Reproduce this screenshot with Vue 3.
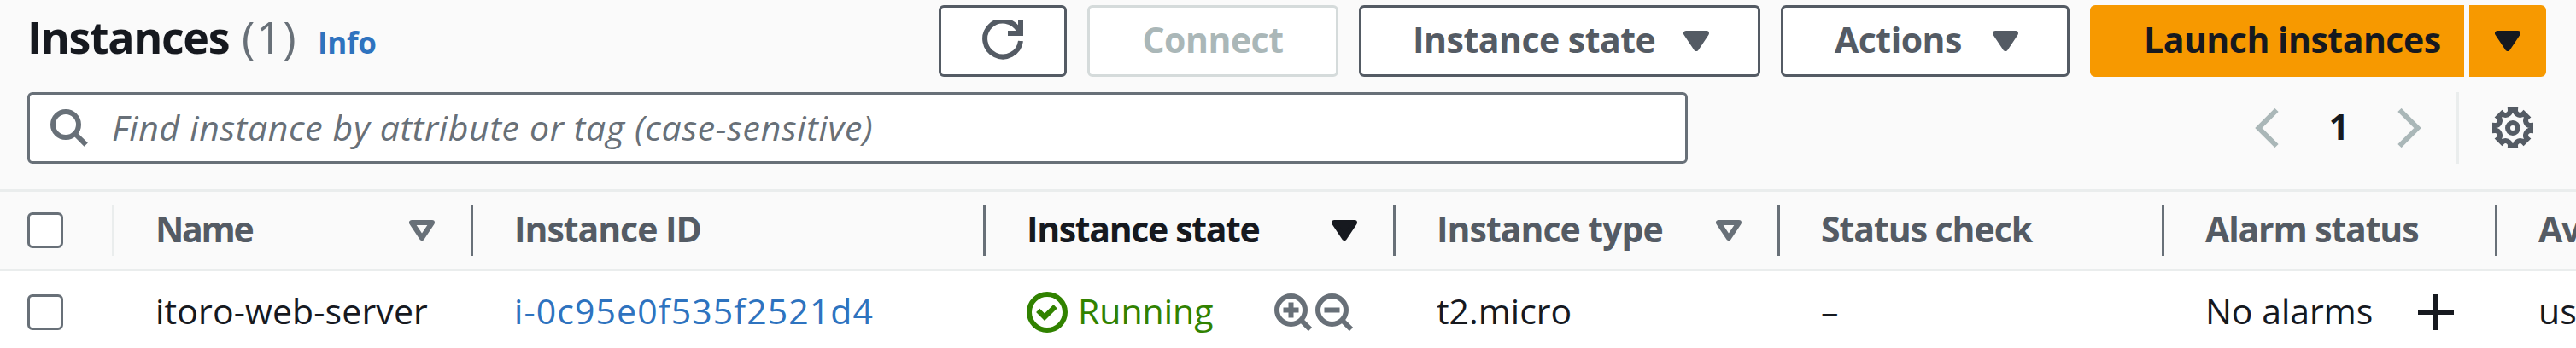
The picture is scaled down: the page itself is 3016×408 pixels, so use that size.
<script setup>
const columns = [
  { key: 'name', label: 'Name', sort: 'idle', track: -2.3 },
  { key: 'id', label: 'Instance ID', track: -1.05 },
  { key: 'state', label: 'Instance state', sort: 'active', track: -1.35 },
  { key: 'type', label: 'Instance type', sort: 'idle', track: -1 },
  { key: 'check', label: 'Status check', track: -1.05 },
  { key: 'alarm', label: 'Alarm status', track: -1.15 },
  { key: 'zone', label: 'Availability Zone', track: -1.2 }
]

// Eight flat teeth joined by round notches, drawn on a 16-unit grid.
const gear = (() => {
  let d = ''
  for (let i = 0; i < 8; i++) {
    const a = (i * Math.PI) / 4
    const pt = (x, y) =>
      `${(8 + x * Math.cos(a) - y * Math.sin(a)).toFixed(3)} ${(8 + x * Math.sin(a) + y * Math.cos(a)).toFixed(3)}`
    d += (i ? 'A1.85 1.85 0 0 0 ' : 'M') + pt(-1, -7) + 'L' + pt(1, -7)
  }
  return d + 'A1.85 1.85 0 0 0 7 1Z'
})()
</script>

<template>
  <main class="panel">
    <header class="bar">
      <h1 class="title">
        <span class="name">Instances</span><span class="count">(1)</span><a class="info">Info</a>
      </h1>
      <div class="actions">
        <button class="btn refresh" aria-label="Refresh">
          <svg class="icon" viewBox="0 0 16 16"><path d="M10 5h5V0M15 8a7 7 0 1 1-.7-4" /></svg>
        </button>
        <button class="btn connect" disabled><span class="label">Connect</span></button>
        <button class="btn state">
          <span class="label">Instance state</span>
          <svg class="caret" viewBox="3 4 10 8"><path d="M4 5h8l-4 6z" /></svg>
        </button>
        <button class="btn more">
          <span class="label">Actions</span>
          <svg class="caret" viewBox="3 4 10 8"><path d="M4 5h8l-4 6z" /></svg>
        </button>
        <div class="split">
          <button class="btn launch"><span class="label">Launch instances</span></button>
          <button class="btn drop" aria-label="More launch options">
            <svg class="caret" viewBox="3 4 10 8"><path d="M4 5h8l-4 6z" /></svg>
          </button>
        </div>
      </div>
    </header>

    <div class="tools">
      <div class="search">
        <svg class="lens" viewBox="0 0 44 44"><circle cx="18" cy="18" r="15" /><path d="M28 28 41.7 41.7" /></svg>
        <span class="hint">Find instance by attribute or tag (case-sensitive)</span>
      </div>
      <nav class="pager">
        <svg class="chev" viewBox="0 0 28 46"><path d="M25.5 2 4.5 23l21 21" /></svg>
        <span class="page">1</span>
        <svg class="chev" viewBox="0 0 28 46"><path d="m2.5 2 21 21-21 21" /></svg>
        <span class="rule"></span>
        <svg class="icon" viewBox="0 0 16 16"><path :d="gear" /><circle cx="8" cy="8" r="2" /></svg>
      </nav>
    </div>

    <div class="grid head">
      <div class="cell pick light"><span class="box"></span></div>
      <div v-for="c in columns" :key="c.key" class="cell" :class="c.sort">
        <span class="text" :style="{ letterSpacing: c.track + 'px' }">{{ c.label }}</span>
        <svg v-if="c.sort" class="caret" viewBox="3 4 10 8"><path d="M4 5h8l-4 6z" /></svg>
      </div>
    </div>

    <div class="grid row">
      <div class="cell pick"><span class="box"></span></div>
      <div class="cell"><span class="text server">itoro-web-server</span></div>
      <div class="cell"><a class="text id">i-0c95e0f535f2521d4</a></div>
      <div class="cell running">
        <svg class="icon ok" viewBox="0 0 16 16"><circle cx="8" cy="8" r="7" /><path d="M4.4 7.3 7 9.9l4.2-4.15" /></svg>
        <span class="text">Running</span>
        <svg class="lens first" viewBox="0 0 44 44">
          <circle cx="19.5" cy="19.5" r="16.5" /><path d="M30.5 30.5 42 42M10.5 19.5h18M19.5 10.5v18" />
        </svg>
        <svg class="lens" viewBox="0 0 44 44">
          <circle cx="19.5" cy="19.5" r="16.5" /><path d="M30.5 30.5 42 42M10.5 19.5h18" />
        </svg>
      </div>
      <div class="cell"><span class="text">t2.micro</span></div>
      <div class="cell"><span class="text">–</span></div>
      <div class="cell alarm">
        <span class="text">No alarms</span>
        <svg class="plus" viewBox="0 0 42 42"><path d="M0 21h42M21 0v42" /></svg>
      </div>
      <div class="cell"><span class="text">us-east-1a</span></div>
    </div>
  </main>
</template>

<style>
html, body { background: #fafafa; overflow: hidden; }
</style>

<style scoped>
.panel {
  box-sizing: border-box;
  width: 3016px;
  height: 408px;
  padding-top: 6px;
  overflow: hidden;
  background: #fafafa;
  color: #16191f;
  font: 400 41px/60px "Open Sans", "Noto Sans", sans-serif;
}
svg { display: block; flex: none; fill: none; stroke: currentColor; stroke-width: 2; }
.icon { width: 48px; height: 48px; }
.caret { width: 30px; height: 24px; fill: currentColor; stroke-linejoin: round; }
.lens { width: 44px; height: 44px; stroke-width: 6; color: #687078; }

.bar { display: flex; justify-content: space-between; height: 84px; padding: 0 35px 0 32px; }
.title { display: flex; align-items: baseline; margin: 0; font-size: 52px; line-height: 73px; white-space: nowrap; }
.name { letter-spacing: -1.4px; }
.count { margin-left: 15px; font-weight: 400; letter-spacing: 1.5px; color: #687078; }
.info { margin-left: 24px; font-size: 35px; letter-spacing: -.3px; color: #2e73bf; }

.actions { display: flex; gap: 24px; }
.btn {
  box-sizing: border-box;
  display: flex;
  align-items: center;
  justify-content: space-between;
  height: 84px;
  padding: 0 57px 0 60px;
  border: 3px solid #545b64;
  border-radius: 6px;
  background: #fff;
  color: #545b64;
  font: inherit;
  font-weight: 700;
  letter-spacing: -.5px;
  white-space: nowrap;
}
.label { padding-bottom: 4px; }
.refresh { width: 150px; padding: 0; justify-content: center; }
.connect { width: 294px; padding: 0; justify-content: center; border-color: #d5dbdb; color: #aab7b8; }
.state { width: 470px; }
.more { width: 338px; }
.split { display: flex; gap: 6px; }
.launch { width: 438px; padding: 0 0 0 60px; border-color: #f79900; border-radius: 6px 0 0 6px; background: #f79900; color: #16191f; }
.drop { width: 90px; padding: 0; justify-content: center; border-color: #f79900; border-radius: 0 6px 6px 0; background: #f79900; color: #16191f; }

.tools { display: flex; justify-content: space-between; height: 84px; margin-top: 18px; padding: 0 50px 0 32px; }
.search {
  box-sizing: border-box;
  display: flex;
  align-items: center;
  width: 1944px;
  padding-left: 24px;
  border: 3px solid #687078;
  border-radius: 6px;
  background: #fff;
}
.hint { margin-left: 28px; padding-bottom: 2px; font-style: italic; letter-spacing: .65px; color: #687078; }
.pager { display: flex; align-items: center; }
.chev { width: 28px; height: 46px; stroke-width: 6; color: #aab7b8; }
.page { box-sizing: border-box; width: 139px; padding: 0 0 4px 2px; font-weight: 700; text-align: center; }
.rule { width: 3px; height: 84px; margin: 0 39px 0 41px; background: #eaeded; }
.pager .icon { color: #545b64; }

.grid { display: grid; grid-template-columns: 134px 420px 600px 480px 450px 450px 390px 1fr; }
.cell { display: flex; align-items: center; min-width: 0; padding-left: 48px; overflow: hidden; white-space: nowrap; }
.pick { padding-left: 32px; }
.box { box-sizing: border-box; width: 42px; height: 42px; border: 3px solid #687078; border-radius: 6px; background: #fff; }
.text { padding-bottom: 4px; }

.head { height: 90px; margin-top: 30px; border: solid #eaeded; border-width: 3px 0; color: #545b64; font-weight: 700; }
.head .cell::after { content: ""; flex: none; width: 3px; height: 60px; margin-left: auto; background: #687078; }
.head .cell:last-child::after { display: none; }
.head .light::after { background: #eaeded; }
.head .caret { margin-left: auto; margin-right: 42px; }
.head .idle::after, .head .active::after { margin-left: 0; }
.idle .caret { fill: none; color: #687078; }
.active { color: #16191f; }

.row { height: 96px; background: #fff; }
.server { letter-spacing: .13px; }
.id { letter-spacing: 1.1px; color: #2e73bf; }
.running { color: #318200; }
.ok { margin-right: 12px; }
.first { margin: 0 4px 0 71px; }
.alarm .plus { width: 42px; height: 42px; margin-left: 53px; stroke-width: 6; }
</style>
